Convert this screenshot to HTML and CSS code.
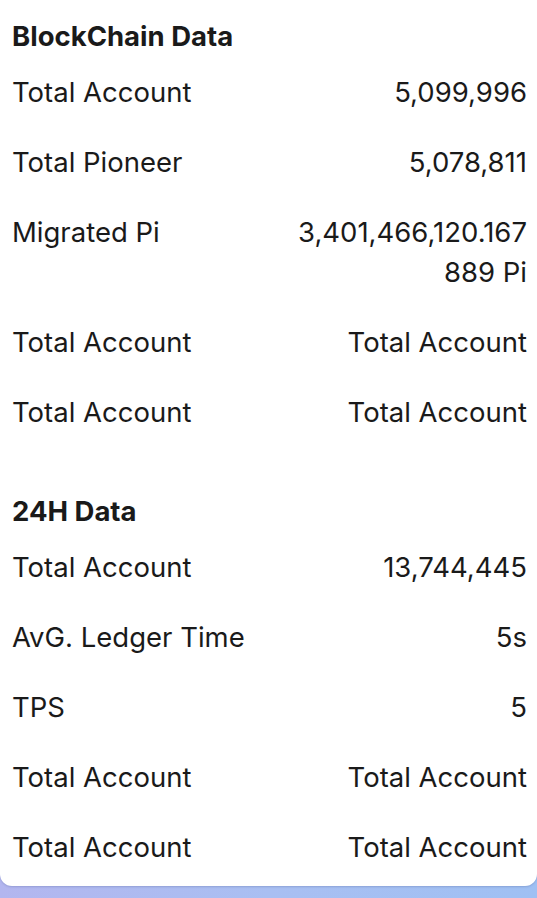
FILE: index.html
```html
<!DOCTYPE html>
<html lang="en">
<head>
    <meta charset="UTF-8">
    <title>BlockChain Data</title>
    <link rel="stylesheet" href="styles.css">
</head>
<body>
<div class="card">
    <div class="section">
        <h2 class="section-title">BlockChain Data</h2>
        <div class="row"><span class="label">Total Account</span><span class="value">5,099,996</span></div>
        <div class="row"><span class="label">Total Pioneer</span><span class="value">5,078,811</span></div>
        <div class="row"><span class="label">Migrated Pi</span><span class="value">3,401,466,120.167<br>889 Pi</span></div>
        <div class="row"><span class="label">Total Account</span><span class="value">Total Account</span></div>
        <div class="row"><span class="label">Total Account</span><span class="value">Total Account</span></div>
    </div>
    <div class="section">
        <h2 class="section-title">24H Data</h2>
        <div class="row"><span class="label">Total Account</span><span class="value">13,744,445</span></div>
        <div class="row"><span class="label">AvG. Ledger Time</span><span class="value">5s</span></div>
        <div class="row"><span class="label">TPS</span><span class="value">5</span></div>
        <div class="row"><span class="label">Total Account</span><span class="value">Total Account</span></div>
        <div class="row"><span class="label">Total Account</span><span class="value">Total Account</span></div>
    </div>
</div>
</body>
</html>
```

FILE: styles.css
```css
body {
    margin: 0;
    min-height: 898px;
    font-family: Inter, "Noto Sans", sans-serif;
    color: #1a1a1a;
    background: linear-gradient(90deg, #b3b6ef 0%, #a9bff2 50%, #9fc0f3 100%);
}
.card {
    background: #ffffff;
    border-radius: 0 0 12px 12px;
    padding: 20px 10px 4px 12px;
    box-shadow: 0 1px 2px rgba(60, 80, 140, 0.25);
}
.section + .section {
    margin-top: 48px;
}
.section-title {
    margin: 0 0 5px;
    font-size: 27.5px;
    line-height: 32px;
    font-weight: 700;
}
.row {
    display: flex;
    justify-content: space-between;
    align-items: flex-start;
    padding: 15px 0;
    font-size: 27.5px;
    line-height: 40px;
}
.value {
    text-align: right;
}
```
